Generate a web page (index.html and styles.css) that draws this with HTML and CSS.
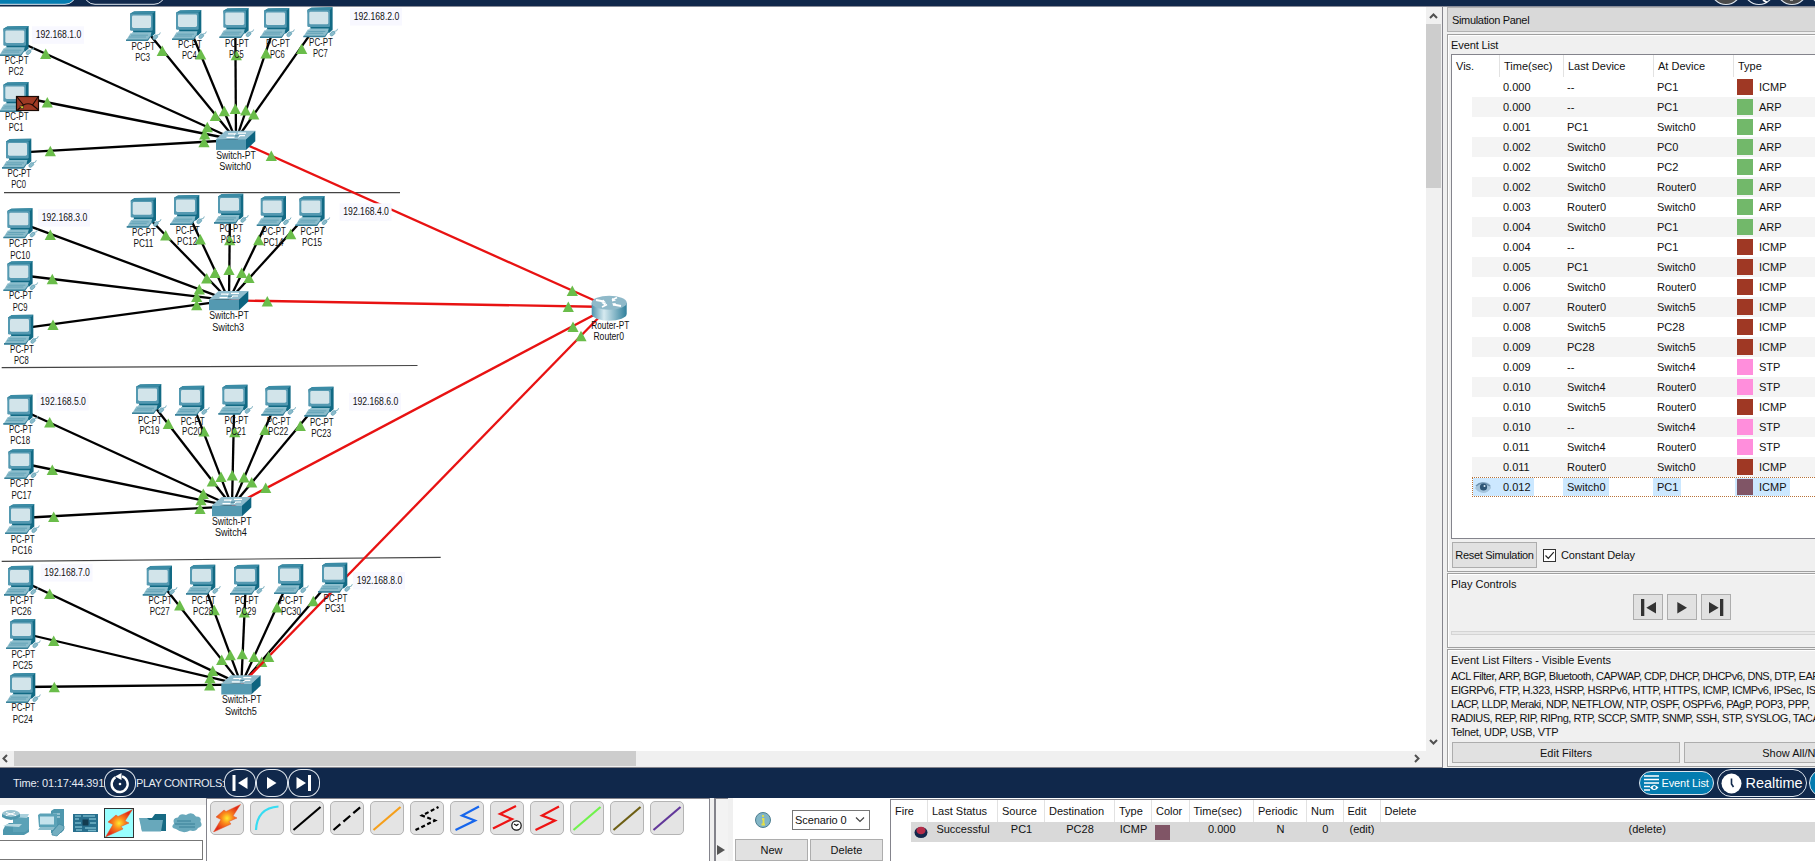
FILE: index.html
```html
<!DOCTYPE html>
<html lang="en">
<head>
<meta charset="utf-8">
<title>Simulation Workspace</title>
<link rel="stylesheet" href="styles.css">
</head>
<body>
<svg class="defs" width="0" height="0">
  <defs>
    <linearGradient id="routerBody" x1="0" x2="1">
      <stop offset="0" stop-color="#4f93ad"/><stop offset=".35" stop-color="#d6eaf0"/><stop offset="1" stop-color="#2f7f9b"/>
    </linearGradient>
    <radialGradient id="boltFill" cx=".5" cy=".5" r=".5">
      <stop offset="0" stop-color="#ffe92e"/><stop offset=".4" stop-color="#fb8a1c"/><stop offset="1" stop-color="#e02a18"/>
    </radialGradient>
    <symbol id="pc" viewBox="-6 -2 42 36" overflow="visible">
      <path d="M0 2.7 4 .4 25.3 0v22.5L22 25.5H4z" fill="#126a84"/>
      <path d="M0 2.7 4 .4 25.3 0 22.7 2.7z" fill="#3b8ca6"/>
      <path d="M2 21.3h19.5l-1.5 5H3z" fill="#8fc1d0"/>
      <rect y="2.7" width="22.7" height="17" rx="1.2" fill="#5499b1"/>
      <rect x="2" y="4.4" width="19" height="12.6" rx="1.4" fill="#d2e4ea"/>
      <path d="M.5 22.2 17.5 22.2 21.2 24.5 17.5 29.5-4 29.5z" fill="#8bbccb"/>
      <path d="M-4 28.4h21.5l3.3-4.2v1.2l-3 4.6H-4z" fill="#39819a"/>
      <path d="M1 24.2h17M-1 26h17" stroke="#5a9db3" stroke-width=".8"/>
      <path d="M23.5 25.5q2-2.6 3.7-1.2t-1.2 3.6q-1.500 1.400-2.700.4t.2-2.800z" fill="#8bbccb" stroke="#4c94ad" stroke-width=".6"/>
      <path d="M27 24q3 .3 3.300-2.500" fill="none" stroke="#7fb2c2" stroke-width="1"/>
    </symbol>
    <symbol id="switch" viewBox="0 0 40 20" overflow="visible">
      <path d="M0 8.500 9.500 0h29.800L30 8.500z" fill="#8fbccd"/>
      <path d="M0 8.500h30v10.700H0z" fill="#5499b1"/>
      <path d="M30 8.500 39.300 0v10.500L30 19.200z" fill="#0d6480"/>
      <path d="M12 3.200h7l-1 1M22 2.400h8M10.500 6.600h8M22 6.600l2-1.600h5" fill="none" stroke="#fff" stroke-width="1.200"/>
      <path d="M19 5.200h4" stroke="#2b6f88" stroke-width=".8"/>
    </symbol>
    <symbol id="bolt" viewBox="0 0 28 28">
      <path d="M27.500 .5 13 7.500 11 6 3 13l5 2.500L.5 28 18 20l-2-2.500 8-3.500-4-2z" fill="url(#boltFill)" stroke="#e5502a" stroke-width=".5"/>
    </symbol>
  </defs>
</svg>

<header class="topbar">
  <svg width="1815" height="7">
    <rect x="-20" y="-20" width="96" height="24.300" rx="11" fill="#047cb0" stroke="#dfe6ee"/>
    <rect x="84" y="-20" width="81" height="24.300" rx="11" fill="none" stroke="#dfe6ee"/>
    <g stroke="#dfe6ee" stroke-width="1.200">
      <circle cx="1726" cy="-10.500" r="15" fill="#4a4a4a"/><circle cx="1759" cy="-10.500" r="15" fill="none"/>
      <circle cx="1792" cy="-10.500" r="15" fill="#4a4a4a"/><circle cx="1825" cy="-10.500" r="15" fill="none"/>
    </g>
    <path d="M1763 0l4 2.500" stroke="#fff" stroke-width="2"/><path d="M1790 0h3" stroke="#aaa" stroke-width="2"/>
  </svg>
</header>

<main class="middle">
  <section class="workspace">
    <div class="canvas-row">
      <svg class="canvas" id="topology" width="1426" height="744" viewBox="0 7 1426 744"></svg>
      <div class="vscroll">
        <svg width="15" height="17"><path d="M4 11l3.500-3.500L11 11" class="chev"/></svg>
        <div class="vthumb"></div>
        <svg class="push" width="15" height="17"><path d="M4 6l3.500 3.500L11 6" class="chev"/></svg>
      </div>
    </div>
    <div class="hscroll">
      <svg width="14" height="15"><path d="M7 4 3.500 7.500 7 11" class="chev"/></svg>
      <div class="hthumb"></div>
      <svg class="push" width="17" height="15"><path d="M6 4l3.500 3.500L6 11" class="chev"/></svg>
    </div>
  </section>

  <aside class="panel">
    <div class="panel-title">Simulation Panel</div>
    <section class="group events">
      <div class="group-label">Event List</div>
      <div class="event-table">
        <div class="event-head"><span>Vis.</span><span>Time(sec)</span><span>Last Device</span><span>At Device</span><span>Type</span></div>
        <div id="events"></div>
      </div>
      <div class="event-actions">
        <button class="btn reset">Reset Simulation</button>
        <span class="check"><svg width="11" height="11"><path d="M1.500 5.500 4.300 8.300 9.800 2.200" fill="none" stroke="#222" stroke-width="1.200"/></svg></span>
        <span>Constant Delay</span>
      </div>
    </section>
    <section class="group play">
      <div class="group-label">Play Controls</div>
      <div class="play-buttons">
        <button class="btn"><svg width="28" height="24"><path d="M7 4h3.300v17H7zM22 7v11.500L12.300 12.700z" fill="#333"/></svg></button>
        <button class="btn"><svg width="28" height="24"><path d="M9.300 7v11.500L19 12.700z" fill="#333"/></svg></button>
        <button class="btn"><svg width="28" height="24"><path d="M18 4h3.300v17H18zM7 7v11.500L16.700 12.700z" fill="#333"/></svg></button>
      </div>
      <div class="slider"></div>
    </section>
    <section class="group filters">
      <div class="group-label">Event List Filters - Visible Events</div>
      <div class="filter-text">
        <div class="l1">ACL Filter, ARP, BGP, Bluetooth, CAPWAP, CDP, DHCP, DHCPv6, DNS, DTP, EAPOL,</div>
        <div class="l2">EIGRPv6, FTP, H.323, HSRP, HSRPv6, HTTP, HTTPS, ICMP, ICMPv6, IPSec, ISAKMP,</div>
        <div class="l3">LACP, LLDP, Meraki, NDP, NETFLOW, NTP, OSPF, OSPFv6, PAgP, POP3, PPP,</div>
        <div class="l4">RADIUS, REP, RIP, RIPng, RTP, SCCP, SMTP, SNMP, SSH, STP, SYSLOG, TACACS,</div>
        <div class="l5">Telnet, UDP, USB, VTP</div>
      </div>
      <div class="filter-actions"><button class="btn">Edit Filters</button><button class="btn">Show All/None</button></div>
    </section>
  </aside>
</main>

<nav class="timebar">
  <span class="time">Time: 01:17:44.391</span>
  <span class="ring"><svg width="32" height="28"><path d="M11.500 8.200A8 8 0 1 0 18 7.400" fill="none" stroke="#fff" stroke-width="2.400"/><path d="M11 7.500 17.500 4v7z" fill="#fff"/><circle cx="16" cy="15" r="1.300" fill="#fff"/></svg></span>
  <span class="pc-label">PLAY CONTROLS:</span>
  <span class="ring"><svg width="32" height="28"><path d="M8.500 6h3v16h-3zM23.500 8v12L14 14z" fill="#fff"/></svg></span>
  <span class="ring"><svg width="32" height="28"><path d="M11 8v12l9.500-6z" fill="#fff"/></svg></span>
  <span class="ring"><svg width="32" height="28"><path d="M20 6h3v16h-3zM8.500 8v12L18 14z" fill="#fff"/></svg></span>
  <span class="pill eventlist"><svg width="17" height="18"><path d="M1 2h15M1 5.500h15M1 9h15M1 12.500h6M1 16h6" stroke="#fff" stroke-width="1.600"/><path d="M7 13.500q4-5 8.500 0-4.500 5-8.500 0z" fill="#fff"/><circle cx="11.300" cy="13.500" r="1.500" fill="#047cb0"/></svg>Event List</span>
  <span class="pill realtime"><svg width="21" height="21"><circle cx="10.500" cy="10.500" r="10" fill="#fff"/><path d="M10.500 5.500v5.500l2 3" fill="none" stroke="#10284b" stroke-width="1.600"/></svg>Realtime</span>
  <span class="pill simulation"></span>
</nav>

<footer class="bottom">
  <section class="devices">
    <div class="strip"></div>
    <div class="device-icons">
      <svg width="34" height="30"><path d="M5 18l4-3h20v9l-5 3H3v-5z" fill="#4e97ad"/><path d="M13 9h16v12l-4 3H13z" fill="#5ba2b7"/><path d="M13 9l4-3h12l-2 4z" fill="#a9d0dc"/><path d="M3 18l5-2h14l-3 3z" fill="#b5d7e0"/><ellipse cx="11" cy="6" rx="9" ry="4" fill="#9bc4d1"/><path d="M2 6v3q9 6 18 0V6q-9 6-18 0z" fill="#4e97ad"/><path d="M6 4.500l10 3M15 4.500l-9 3" stroke="#fff"/></svg>
      <svg width="36" height="30"><path d="M17 3l3-2h10v21l-3 3H17z" fill="#4e97ad"/><path d="M19 6h7M19 9h7" stroke="#a9d0dc" stroke-width="1.500"/><path d="M4 7l2-1.500h17V19H5z" fill="#5ba2b7"/><path d="M6 8.500h14v8H6z" fill="#c5e3ec"/><path d="M6 19h15l-2 3H4z" fill="#8bbccb"/><path d="M18 24l7-8 5 2v3l-7 7-5-1z" fill="#73aec0" stroke="#3c879f" stroke-width=".7"/></svg>
      <svg width="34" height="30"><path d="M3 6h25v18H3z" fill="#286f8d"/><path d="M5 8h6M13 8h12M5 11h4M19 11h7M5 15h6M20 15h6M5 19h7M15 20h11M6 22h6M18 22.500h8" stroke="#73b5c8" stroke-width="1.300"/><path d="M12.500 11.500h6v6h-6z" fill="#133c50"/></svg>
      <span class="selected"><svg width="28" height="28"><use href="#bolt"/></svg></span>
      <svg width="36" height="30"><path d="M6 10h12l3-4h11v17H8z" fill="#176a83"/><path d="M5 10h8l2 2h14l-2 11.500H8z" fill="#68a8bb"/></svg>
      <svg width="34" height="30"><path d="M6 21Q0 20 4 15.500 2 10 8 9.500q2-5 8-2.500 6-4 10 1.500 6 0 4.500 5 3 5-2.500 6.500-2 4-8 2.500-7 4-14-1.500z" fill="#68a8bb"/><path d="M7 13h14M5 16h20M9 19h16" stroke="#347c94" stroke-width=".9"/></svg>
    </div>
    <div class="device-name"></div>
  </section>
  <section class="links" id="links">
    <span class="link"><svg width="32" height="32"><use href="#bolt" x="2" y="2" width="28" height="28"/></svg></span>
    <span class="link"><svg width="32" height="32"><path d="M5 28Q6 6 27.500 4.500" stroke="#36dcf2"/></svg></span>
    <span class="link"><svg width="32" height="32"><path d="M2.500 28 29.500 5" stroke="#000"/></svg></span>
    <span class="link"><svg width="32" height="32"><path d="M2.500 28 29.500 5" stroke="#000" stroke-dasharray="9 4"/></svg></span>
    <span class="link"><svg width="32" height="32"><path d="M2.500 28 29.500 5" stroke="#f59f1b"/></svg></span>
    <span class="link"><svg width="32" height="32"><path d="M4.500 28 24 18.500 11 13.500 27.500 5" stroke="#000" stroke-dasharray="4 2.500"/></svg></span>
    <span class="link"><svg width="32" height="32"><path d="M4.500 28 24 18.500 11 13.500 28 4.500" stroke="#1766ec"/></svg></span>
    <span class="link"><svg width="32" height="32"><path d="M2 26.500 21 17 9 12 25 4" stroke="#ee1414"/><circle cx="25.500" cy="23.500" r="4.700" fill="#fff" stroke="#111" stroke-width="1.200"/><path class="hands" d="M23 22l2.500 1.500 2-1.500" stroke="#111"/></svg></span>
    <span class="link"><svg width="32" height="32"><path d="M4.500 28 24 18.500 11 13.500 28 4.500" stroke="#ee1414"/></svg></span>
    <span class="link"><svg width="32" height="32"><path d="M2.500 28 29.500 5" stroke="#70f24c"/></svg></span>
    <span class="link"><svg width="32" height="32"><path d="M2.500 28 29.500 5" stroke="#6d5f14"/></svg></span>
    <span class="link"><svg width="32" height="32"><path d="M2.500 28 29.500 5" stroke="#62389a"/></svg></span>
  </section>
  <div class="splitter"><svg width="12" height="12"><path d="M1 1l8 5-8 5z" fill="#555"/></svg></div>
  <section class="scenario">
    <div class="scenario-pick">
      <svg width="16" height="16"><circle cx="8" cy="8" r="7.500" fill="#83b6c6" stroke="#4d7e90"/><path d="M8 3v2M7 7h1.500v5M6.500 12.500h3.500" fill="none" stroke="#e5e046" stroke-width="1.800"/></svg>
      <span class="combo">Scenario 0<svg width="10" height="8"><path d="M1 1.500 5 5.500 9 1.500" fill="none" stroke="#444" stroke-width="1.200"/></svg></span>
    </div>
    <div class="scenario-actions"><button class="btn">New</button><button class="btn">Delete</button></div>
  </section>
  <section class="pdu">
    <div class="pdu-head"><span>Fire</span><span>Last Status</span><span>Source</span><span>Destination</span><span>Type</span><span>Color</span><span>Time(sec)</span><span>Periodic</span><span>Num</span><span>Edit</span><span>Delete</span></div>
    <div class="pdu-row">
      <span><svg width="15" height="14"><ellipse cx="7" cy="7.500" rx="6.500" ry="5.500" fill="#14284c"/><ellipse cx="7" cy="5.500" rx="4.500" ry="3.800" fill="#b62c48"/></svg></span>
      <span>Successful</span><span>PC1</span><span>PC28</span><span>ICMP</span><span><i class="swatch"></i></span><span>0.000</span><span>N</span><span>0</span><span>(edit)</span><span class="del">(delete)</span>
    </div>
  </section>
</footer>
<script src="app.js"></script>
</body>
</html>
```

FILE: styles.css
```css
* { box-sizing: border-box; }
body {
  margin: 0; width: 1815px; height: 861px; overflow: hidden;
  display: flex; flex-direction: column;
  font: 11px/14px "Liberation Sans", Arial, sans-serif; color: #111; background: #f0f0f0;
}
svg { display: block; flex: none; }
.defs { position: absolute; }
.push { margin-top: auto; }
.btn {
  font: inherit; color: inherit; padding: 0; margin: 0; border: 1px solid #adadad; border-radius: 0;
  background: #e1e1e1; white-space: nowrap; display: flex; align-items: center; justify-content: center;
}

.topbar { height: 7px; flex: none; background: #10284b; border-bottom: 1px solid #8a8d99; overflow: hidden; }

.middle { height: 761px; flex: none; display: flex; }
.workspace {
  width: 1443px; flex: none; display: flex; flex-direction: column; background: #f0f0f0;
  border-right: 1px solid #84848c; border-bottom: 1px solid #84848c;
}
.canvas-row { height: 744px; display: flex; }
.canvas { background: #fff; }
.canvas text { font: 10px "Liberation Sans", Arial, sans-serif; fill: #111; }
.vscroll { width: 15px; display: flex; flex-direction: column; }
.vthumb { height: 164px; background: #cdcdcd; }
.hscroll { height: 15px; width: 1426px; display: flex; }
.hscroll .push { margin: 0 0 0 auto; }
.hthumb { width: 622px; background: #cdcdcd; }
.chev { fill: none; stroke: #505050; stroke-width: 2; }

.panel { width: 372px; flex: none; padding-left: 4px; overflow: hidden; white-space: nowrap; display: flex; flex-direction: column; }
.panel-title {
  width: 380px; height: 25px; flex: none; padding: 5px 0 0 4px; border: 1px solid #b2b2b2;
  background: #d9d9d9; letter-spacing: -.33px;
}
.group { width: 380px; flex: none; border: 1px solid #a0a0a0; box-shadow: inset 1px 1px #fff; padding-left: 3px; }
.group-label { height: 19px; padding-top: 3px; }
.events { margin-top: 2px; height: 538px; }
.events .group-label { letter-spacing: -.1px; }
.event-table { height: 485px; border: 1px solid #84848c; background: #fff; }
.event-head { height: 22px; display: grid; grid-template-columns: 48px 64px 90px 80px 90px; }
.event-head span { border-right: 1px solid #e2e2e2; padding: 4px 0 0 4px; }
.event-row { height: 20px; margin-left: 20px; display: grid; grid-template-columns: 27px 64px 90px 80px 110px; align-items: stretch; }
.event-row:nth-child(even) { background: #f4f4f4; }
.event-row > * { display: flex; align-items: center; }
.event-row mark { background: none; color: inherit; height: 18px; display: flex; align-items: center; padding: 0 3px 0 4px; }
.event-row i { width: 16px; height: 16px; margin: 0 6px 0 1px; }
.event-row mark.t { padding-left: 1px; margin-left: 2px; }
.event-row.sel { background: #fff; border: 1px dotted #b8733a; }
.event-row.sel { grid-template-columns: 26px 64px 90px 80px 110px; }
.event-row.sel mark, .event-row.sel .eye { background: #cce8ff; }
.event-row.sel .eye { height: 18px; }
.event-actions { display: flex; align-items: center; padding: 3px 0 0 1px; letter-spacing: -.1px; }
.reset { width: 85px; height: 26px; letter-spacing: -.3px; }
.check { width: 13px; height: 13px; border: 1px solid #333; background: #fff; margin: 0 5px 0 6px; }
.play { margin-top: 1px; height: 75px; }
.play-buttons { display: flex; gap: 4px; padding: 1px 0 0 182px; }
.play-buttons .btn { width: 30px; height: 26px; }
.slider { height: 4px; margin-top: 11px; border: 1px solid #d4d4d4; background: #e8e8e8; }
.filters { margin-top: 1px; height: 118px; }
.filter-text { height: 73px; padding-top: 0; letter-spacing: -.49px; }
.filter-text .l2 { letter-spacing: -.43px; }
.filter-text .l5 { letter-spacing: -.3px; }
.filter-actions { display: flex; gap: 4px; padding-left: 1px; }
.filter-actions .btn { width: 228px; height: 21px; flex: none; }

.timebar { height: 30px; flex: none; background: #10284b; color: #e6ebf2; display: flex; align-items: center; padding-left: 13px; white-space: nowrap; overflow: hidden; }
.time { width: 91px; letter-spacing: -.18px; }
.pc-label { width: 89px; letter-spacing: -.42px; }
.ring { width: 32px; height: 28px; border-radius: 13px; box-shadow: inset 0 0 0 1px #dfe6ee; }
.pill { display: flex; align-items: center; flex: none; border: 1px solid #dfe6ee; border-radius: 15px; color: #fff; }
.eventlist { width: 75px; height: 24px; margin-left: 1319px; padding-left: 3px; gap: 1px; background: #047cb0; border-radius: 12px; letter-spacing: -.1px; }
.realtime { width: 90px; height: 28px; margin-left: 3px; padding-left: 3px; gap: 3px; font-size: 14.500px; }
.simulation { width: 90px; height: 28px; margin-left: 2px; background: #047cb0; }

.bottom { height: 63px; flex: none; display: flex; background: #fff; overflow: hidden; }
.devices { width: 206px; flex: none; display: flex; flex-direction: column; }
.strip { height: 7px; background: #f0f0f0; }
.device-icons { height: 35px; display: flex; align-items: center; }
.selected { width: 30px; height: 30px; border: 1px solid #333; background: #9ff; }
.device-name { width: 203px; height: 20px; border: 1px solid #777; border-left: 0; }
.links { width: 504px; flex: none; border: 1px solid #84848c; border-bottom: 0; display: flex; gap: 6px; padding: 2px 0 0 3px; }
.link { width: 34px; height: 34px; flex: none; border: 1px solid #b4b4b4; border-radius: 5px; background: #e4e4e4; }
.link path { fill: none; stroke-width: 2.2; }
.link .hands { stroke-width: 1.1; }
.splitter { width: 23px; flex: none; border-left: 4px solid #f0f0f0; border-right: 5px solid #f0f0f0; padding: 46px 0 0 2px; background: #f3f3f3; box-shadow: inset 2px 1px #84848c; }
.scenario { width: 157px; flex: none; display: flex; flex-direction: column; }
.scenario-pick { height: 44px; padding: 12px 0 0 22px; display: flex; gap: 21px; }
.scenario-pick > svg { margin-top: 2px; }
.combo { width: 78px; height: 20px; border: 1px solid #777; display: flex; align-items: center; justify-content: space-between; padding: 0 4px 0 2px; letter-spacing: -.1px; }
.scenario-actions { display: flex; gap: 2px; padding-left: 2px; }
.scenario-actions .btn { width: 73px; height: 22px; }
.pdu { width: 940px; flex: none; border-left: 1px solid #84848c; border-top: 1px solid #84848c; margin-top: 1px; }
.pdu-head, .pdu-row { display: grid; grid-template-columns: 37px 70px 47px 70px 37px 37.500px 64.500px 53px 36.500px 37px 1fr; white-space: nowrap; }
.pdu-head { height: 22px; }
.pdu-head span { border-right: 1px solid #e2e2e2; padding: 4px 0 0 4px; }
.pdu-row { height: 20px; margin-left: 20px; grid-template-columns: 17px 70px 47px 70px 37px 37.500px 64.500px 53px 36.500px 37px 1fr; background: #d9d9d9; }
.pdu-row span { text-align: center; }
.pdu-row span svg { margin: 3px 0 0 3px; }
.pdu-row .swatch { display: block; width: 15px; height: 15px; margin: 3px 0 0 3px; background: #805566; }
.pdu-row .del { text-align: left; padding-left: 248px; }
```

FILE: app.js
```js
const NS = 'http://www.w3.org/2000/svg';
const root = document.getElementById('topology');

function draw(tag, attrs, text) {
  const node = document.createElementNS(NS, tag);
  for (const key in attrs) node.setAttribute(key, attrs[key]);
  if (text) node.textContent = text;
  root.appendChild(node);
  return node;
}

// Each site: switch [name, x, y, label x, baselines], PCs in the same form, link markers (last one is the uplink)
const sites = [
  { sw: ['Switch0', 216, 130.7, 236, 158.7, 169.7],
    pcs: [['PC2', 3.3, 26, 16.6, 64, 75], ['PC1', 3.3, 82, 16.8, 120, 131], ['PC0', 6, 138.7, 19.3, 177, 188],
      ['PC3', 130, 11, 143.3, 50, 61], ['PC4', 176, 10, 190, 48.3, 58.7], ['PC5', 223.3, 8, 237, 47, 58],
      ['PC6', 264, 8, 278, 47, 58], ['PC7', 307.3, 7.3, 321, 46.3, 57]],
    marks: [[45.7, 53.7], [47.3, 102.3], [50.3, 151], [162.3, 50.7], [200.7, 54.3], [236.3, 55], [266, 53.3], [301.7, 48.7],
      [215.3, 115.7], [224.3, 111], [235.3, 108.7], [245.7, 110.3], [253.7, 114.3], [207.3, 127], [204.7, 134.3], [204, 142], [271.3, 155.7]] },
  { sw: ['Switch3', 209, 291, 229, 319, 331],
    pcs: [['PC10', 7.3, 208.3, 20.8, 247.3, 259], ['PC9', 7.3, 261, 20.8, 299.3, 311], ['PC8', 8, 314.7, 22, 353.3, 364],
      ['PC11', 130.7, 197.7, 144, 236.3, 247.3], ['PC12', 174, 195, 187.7, 234.3, 245.3], ['PC13', 218, 193.7, 231.3, 232.3, 243.3],
      ['PC14', 260.7, 196, 274, 235, 246], ['PC15', 299.3, 196, 312.5, 235, 246]],
    marks: [[50.3, 234.7], [52.3, 279], [53, 324.7], [165.7, 235.3], [200.3, 239.3], [229.7, 240], [258.7, 240], [290.7, 234],
      [206.7, 278.3], [215, 272.7], [229, 269.7], [241.7, 272.7], [249, 277.7], [199.3, 289.3], [196.7, 296.7], [196.7, 305], [267.3, 301.3]] },
  { sw: ['Switch4', 212, 497, 231.7, 525, 535.7],
    pcs: [['PC18', 7.3, 394.7, 20.8, 433.3, 444], ['PC17', 8.3, 449, 22, 487.3, 499], ['PC16', 9, 504, 22.7, 543.3, 554],
      ['PC19', 136, 384, 150, 423.7, 434.3], ['PC20', 179, 385.7, 192.7, 425, 435.3], ['PC21', 222.3, 384.7, 236.5, 424, 435.3],
      ['PC22', 265.3, 385.7, 278.7, 425, 435.3], ['PC23', 308.3, 386.7, 321.8, 425.7, 436.7]],
    marks: [[49.7, 422.3], [52.3, 469.7], [53.7, 516.7], [168.3, 423.7], [204, 431.3], [234.7, 432], [265, 429.7], [300.3, 425.7],
      [212.3, 481.3], [221, 476.7], [232.3, 475.3], [244, 477.3], [251.7, 482.3], [203.3, 493.7], [201, 500], [200, 508.7], [265.7, 487.7]] },
  { sw: ['Switch5', 221.3, 675.3, 241.7, 703, 715],
    pcs: [['PC26', 8, 565.7, 22, 604.3, 614.7], ['PC25', 10, 619, 23.3, 658.3, 669], ['PC24', 10, 673, 23.3, 711.3, 722.7],
      ['PC27', 146.7, 565.7, 160.3, 604.3, 615], ['PC28', 190, 564.7, 203.7, 603.7, 614.7], ['PC29', 234, 564.7, 246.7, 603.7, 614.7],
      ['PC30', 278, 564, 291.5, 603.7, 614.7], ['PC31', 322, 562.7, 335.5, 601.7, 612.3]],
    marks: [[49.7, 593.7], [53.7, 640.7], [54.3, 687], [179.7, 605.3], [214.3, 610], [244.3, 612.3], [277, 607.3], [313.3, 601],
      [221.7, 659.7], [230.3, 655], [242.3, 654], [254, 656.7], [261.7, 661.7], [212.7, 670.7], [210, 678], [209.7, 685.3], [268.7, 656.7]] }
];
const subnets = [['192.168.1.0', 35.7, 38.3], ['192.168.2.0', 353.7, 20], ['192.168.3.0', 41.7, 221], ['192.168.4.0', 343.3, 215.3],
  ['192.168.5.0', 40.3, 405], ['192.168.6.0', 352.7, 405], ['192.168.7.0', 44.3, 576], ['192.168.8.0', 356.7, 584]];
const dividers = [[4, 192.7, 400, 192.7], [1.7, 367.7, 417.5, 365.5], [1.7, 561.3, 440.7, 557.3]];
const router = [609, 307];

const link = (x1, y1, x2, y2, stroke, w) => draw('line', { x1, y1, x2, y2, stroke, 'stroke-width': w });
const mark = ([x, y]) => draw('path', { d: `M${x} ${y - 5.3}l5.600 10.600h-11.200z`, fill: '#6abd4a' });

function label(text, x, y, width) {
  draw('text', { x: x - width / 2, y, textLength: width, lengthAdjust: 'spacingAndGlyphs' }, text);
}

dividers.forEach(d => link(...d, '#444', 1.2));
sites.forEach(s => {
  const [, sx, sy] = s.sw;
  s.pcs.forEach(([, x, y]) => link(x + 12, y + 14, sx + 20, sy + 9.3, '#000', 2.3));
  s.marks.slice(0, -1).forEach(mark);
});
sites.forEach(s => {
  link(s.sw[1] + 20, s.sw[2] + 9.3, ...router, '#e81212', 2.3);
});
sites.forEach(s => mark(s.marks[16]));
[[572.3, 290.7], [568.3, 306.7], [573, 326.7], [581, 336]].forEach(mark);

subnets.forEach(([t, x, y]) => {
  draw('rect', { x: x - 3.7, y: y - 12, width: 52, height: 17.5, fill: '#f8f8ff' });
  label(t, x + 22.8, y, 45.6);
});

sites.forEach(s => {
  s.pcs.forEach(([, x, y]) => draw('use', { href: '#pc', x: x - 6, y: y - 2, width: 42, height: 36 }));
  draw('use', { href: '#switch', x: s.sw[1], y: s.sw[2], width: 40, height: 20 });
});

draw('path', { d: 'M591.700 302.700v11a17.500 7 0 0 0 35 0v-11z', fill: 'url(#routerBody)' });
draw('ellipse', { cx: 609.2, cy: 302.7, rx: 17.5, ry: 7, fill: '#8fb9c9' });
draw('path', { d: 'M596 300l8 1.500m3 3l-5 2.500m10-7l5-2.500m-4 7l8 1.500', stroke: '#fff', 'stroke-width': 1.8, fill: 'none' });
draw('path', { d: 'M603 299.500l3 3-4 .5zM606 303l-5-.5 4 3zM612 298v3.500l4-1zM612 303.500l4-.5-2 3z', fill: '#fff' });

sites.forEach(s => {
  s.pcs.forEach(([name, , , cx, b1, b2]) => {
    label('PC-PT', cx, b1, 23.8);
    label(name, cx - 0.6, b2, name.length > 3 ? 20 : 14.8);
  });
  label('Switch-PT', s.sw[3], s.sw[4], 39.6);
  label(s.sw[0], s.sw[3] - 0.8, s.sw[5], 32);
});
label('Router-PT', 610.3, 329.3, 38);
label('Router0', 608.7, 340, 30.6);

draw('rect', { x: 16.5, y: 96.5, width: 22, height: 14, fill: '#a03a24', stroke: '#1c0b06', 'stroke-width': 1.2 });
draw('path', { d: 'M17 97l6.500 8q4.500-2.500 9 0l5.500-8M23.500 105l-6 5M32.500 105l6 5', fill: 'none', stroke: '#1c0b06', 'stroke-width': 1.1 });
draw('path', { d: 'M19.500 106h4v2.500h-2z', fill: '#d3d02c', stroke: '#222', 'stroke-width': 0.6 });

const colors = { ICMP: '#9f3824', ARP: '#72b86a', STP: '#ff8edc' };
const events = [
  ['0.000', '--', 'PC1', 'ICMP'], ['0.000', '--', 'PC1', 'ARP'], ['0.001', 'PC1', 'Switch0', 'ARP'], ['0.002', 'Switch0', 'PC0', 'ARP'],
  ['0.002', 'Switch0', 'PC2', 'ARP'], ['0.002', 'Switch0', 'Router0', 'ARP'], ['0.003', 'Router0', 'Switch0', 'ARP'],
  ['0.004', 'Switch0', 'PC1', 'ARP'], ['0.004', '--', 'PC1', 'ICMP'], ['0.005', 'PC1', 'Switch0', 'ICMP'], ['0.006', 'Switch0', 'Router0', 'ICMP'],
  ['0.007', 'Router0', 'Switch5', 'ICMP'], ['0.008', 'Switch5', 'PC28', 'ICMP'], ['0.009', 'PC28', 'Switch5', 'ICMP'],
  ['0.009', '--', 'Switch4', 'STP'], ['0.010', 'Switch4', 'Router0', 'STP'], ['0.010', 'Switch5', 'Router0', 'ICMP'],
  ['0.010', '--', 'Switch4', 'STP'], ['0.011', 'Switch4', 'Router0', 'STP'], ['0.011', 'Router0', 'Switch0', 'ICMP'],
  ['0.012', 'Switch0', 'PC1', 'ICMP']
];
const eye = '<svg width="20" height="16"><path d="M2 9Q6 2 12 3t6 6q-3 5-8 5Q4 13 2 9z" fill="#a5c4dc"/><path d="M3 7q6-6 14 0" fill="none" stroke="#6f93b0" stroke-width="1.500"/><circle cx="10.500" cy="8" r="3.600" fill="#2e5676"/><circle cx="11.500" cy="7" r="1" fill="#dcecf8"/></svg>';
document.getElementById('events').innerHTML = events.map(([time, last, at, type], i) => {
  const sel = i === events.length - 1;
  const color = sel ? '#805566' : colors[type];
  return `<div class="event-row${sel ? ' sel' : ''}"><span class="eye">${sel ? eye : ''}</span><span><mark>${time}</mark></span><span><mark>${last}</mark></span><span><mark>${at}</mark></span><span><mark class="t"><i style="background:${color}"></i>${type}</mark></span></div>`;
}).join('');
```
